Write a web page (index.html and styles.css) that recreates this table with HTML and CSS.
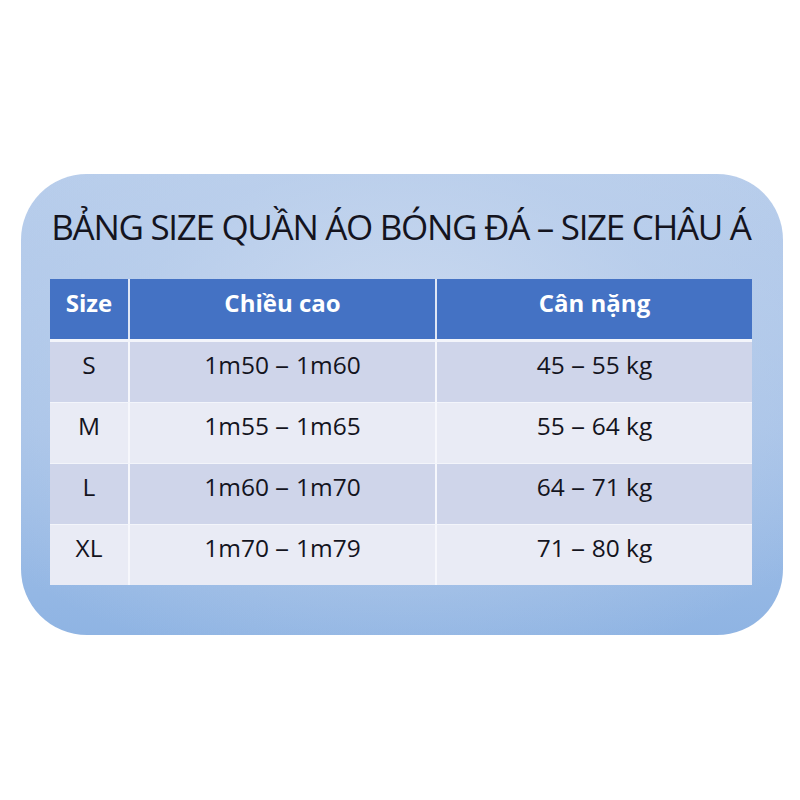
FILE: index.html
```html
<!DOCTYPE html>
<html lang="vi">
<head>
<meta charset="utf-8">
<title>Bảng size</title>
<link rel="stylesheet" href="styles.css">
</head>
<body>
<div class="panel">
  <h1 class="title">BẢNG SIZE QUẦN ÁO BÓNG ĐÁ – SIZE CHÂU Á</h1>
  <div class="table">
    <div class="row head">
      <div class="cell">Size</div>
      <div class="cell">Chiều cao</div>
      <div class="cell">Cân nặng</div>
    </div>
    <div class="row odd">
      <div class="cell">S</div>
      <div class="cell">1m50 <span class="dash">–</span> 1m60</div>
      <div class="cell">45 <span class="dash">–</span> 55 kg</div>
    </div>
    <div class="row even">
      <div class="cell">M</div>
      <div class="cell">1m55 <span class="dash">–</span> 1m65</div>
      <div class="cell">55 <span class="dash">–</span> 64 kg</div>
    </div>
    <div class="row odd">
      <div class="cell">L</div>
      <div class="cell">1m60 <span class="dash">–</span> 1m70</div>
      <div class="cell">64 <span class="dash">–</span> 71 kg</div>
    </div>
    <div class="row even last">
      <div class="cell">XL</div>
      <div class="cell">1m70 <span class="dash">–</span> 1m79</div>
      <div class="cell">71 <span class="dash">–</span> 80 kg</div>
    </div>
  </div>
</div>
</body>
</html>
```

FILE: styles.css
```css
html, body {
  margin: 0;
  padding: 0;
  background: #ffffff;
}

body {
  width: 800px;
  height: 800px;
  font-family: "Open Sans", "Noto Sans", sans-serif;
  color: #14141e;
}

.panel {
  box-sizing: border-box;
  margin: 174px 0 0 21px;
  width: 762px;
  height: 461px;
  border-radius: 66px;
  background:
    radial-gradient(ellipse 70% 75% at 50% 35%, rgba(205, 219, 240, 0.9) 0%, rgba(190, 209, 236, 0.6) 50%, rgba(190, 209, 236, 0) 100%),
    linear-gradient(180deg, #b6cceb 0%, #a6c2e8 55%, #8fb4e3 100%);
  padding: 29px 31px 0 29px;
  display: flex;
  flex-direction: column;
}

.title {
  margin: 0;
  height: 76px;
  font-size: 35px;
  font-weight: 400;
  line-height: 47px;
  text-align: center;
  letter-spacing: -1.3px;
  color: #14141e;
  white-space: nowrap;
}

.table {
  width: 702px;
  background: #f3f5fb;
  display: flex;
  flex-direction: column;
}

.row {
  display: grid;
  grid-template-columns: 78px 305px 315px;
  column-gap: 2px;
  background: #f6f7fc;
  margin-bottom: 1px;
}

.row.last {
  margin-bottom: 0;
}

.row.head {
  background: #dfe6f5;
  margin-bottom: 3px;
}

.cell {
  height: 60px;
  box-sizing: border-box;
  text-align: center;
  font-size: 24.5px;
  line-height: 33px;
  padding-top: 6px;
}

.dash {
  display: inline-block;
  margin: 0 1px;
  transform: scaleX(1.15);
}

.head .cell {
  background: #4472c4;
  color: #ffffff;
  font-weight: 700;
  font-size: 24px;
  padding-top: 7px;
}

.odd .cell {
  background: #cfd5ea;
}

.even .cell {
  background: #e9ebf5;
}
```
